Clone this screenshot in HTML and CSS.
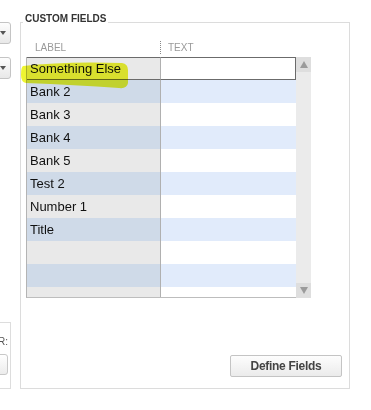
FILE: index.html
```html
<!DOCTYPE html>
<html lang="en">

<head>
    <meta charset="UTF-8">
    <meta name="viewport" content="width=device-width, initial-scale=1.0">
    <title>Custom Fields</title>
    <link rel="stylesheet" href="styles.css">
</head>

<body>

    <div class="page">

        <aside class="side">
            <div class="side-inner">
                <div class="select"><span class="caret"></span></div>
                <div class="select second"><span class="caret"></span></div>
                <div class="side-box">
                    <p class="side-label">OWNER:</p>
                    <div class="side-button"></div>
                </div>
            </div>
        </aside>

        <section class="panel">
            <h2 class="panel-title">CUSTOM FIELDS</h2>

            <div class="grid-head">
                <span class="head-label">LABEL</span>
                <span class="head-text">TEXT</span>
            </div>

            <div class="grid">
                <div class="rows">
                    <div class="row selected"><span class="cell-label">Something Else</span><span class="cell-text"></span></div>
                    <div class="row"><span class="cell-label">Bank 2</span><span class="cell-text"></span></div>
                    <div class="row"><span class="cell-label">Bank 3</span><span class="cell-text"></span></div>
                    <div class="row"><span class="cell-label">Bank 4</span><span class="cell-text"></span></div>
                    <div class="row"><span class="cell-label">Bank 5</span><span class="cell-text"></span></div>
                    <div class="row"><span class="cell-label">Test 2</span><span class="cell-text"></span></div>
                    <div class="row"><span class="cell-label">Number 1</span><span class="cell-text"></span></div>
                    <div class="row"><span class="cell-label">Title</span><span class="cell-text"></span></div>
                    <div class="row"><span class="cell-label"></span><span class="cell-text"></span></div>
                    <div class="row"><span class="cell-label"></span><span class="cell-text"></span></div>
                    <div class="row"><span class="cell-label"></span><span class="cell-text"></span></div>
                </div>
                <div class="scrollbar">
                    <span class="scroll-btn"><span class="arrow up"></span></span>
                    <span class="scroll-btn"><span class="arrow down"></span></span>
                </div>
            </div>

            <div class="panel-foot">
                <button class="define-btn">Define Fields</button>
            </div>
        </section>

    </div>

    <!-- marker stroke someone drew over the screenshot -->
    <svg class="highlight" width="120" height="40" viewBox="0 0 120 40">
        <path d="M3 8 Q45 3 102 5 Q108 6 108 12 L108 25 Q107 31 99 30 Q55 27 6 25 Q1 24 1 17 Q1 9 3 8 Z"
            fill="#eef532" />
    </svg>

</body>

</html>
```

FILE: styles.css
```css
body {
    margin: 0;
    font-family: "Liberation Sans", Arial, sans-serif;
    background-color: #fff;
    color: #111;
}

.page {
    position: relative;
    display: flex;
    width: 371px;
    height: 410px;
    overflow: hidden;
}

/* left column, only its right edge is visible */

.side {
    flex: none;
    width: 12px;
    overflow: hidden;
}

.side-inner {
    display: flex;
    flex-direction: column;
    width: 101px;
    margin-left: -90px;
    padding-top: 22px;
}

.select {
    display: flex;
    align-items: center;
    justify-content: flex-end;
    box-sizing: border-box;
    height: 22px;
    padding-right: 4px;
    border: 1px solid #c4c4c4;
    border-radius: 3px;
    background: linear-gradient(#fdfdfd, #e8e8e8);
}

.select.second {
    margin-top: 13px;
}

.caret {
    width: 0;
    height: 0;
    border-left: 3px solid transparent;
    border-right: 3px solid transparent;
    border-top: 4px solid #555;
}

.side-box {
    box-sizing: border-box;
    height: 67px;
    margin-top: 243px;
    padding-top: 13px;
    border-top: 1px solid #ddd;
    border-right: 1px solid #ddd;
    border-bottom: 1px solid #ddd;
}

.side-label {
    margin: 0;
    padding-right: 2px;
    text-align: right;
    font-size: 10px;
    line-height: 12px;
    color: #555;
}

.side-button {
    width: 98px;
    height: 21px;
    margin-top: 6px;
    box-sizing: border-box;
    border: 1px solid #c8c8c8;
    border-radius: 3px;
    background: linear-gradient(#fff, #ececec);
}

/* custom fields panel */

.panel {
    display: flex;
    flex-direction: column;
    flex: none;
    box-sizing: border-box;
    width: 330px;
    height: 367px;
    margin: 22px 0 0 8px;
    padding: 0 0 0 5px;
    border: 1px solid #dcdcdc;
}

.panel-title {
    align-self: flex-start;
    margin: -10px 0 0 -3px;
    padding: 0 2px;
    font-size: 10px;
    line-height: 12px;
    font-weight: bold;
    color: #333;
    background-color: #fff;
}

.grid-head {
    display: flex;
    align-items: center;
    height: 19px;
    margin-top: 13px;
    font-size: 10px;
    color: #9a9a9a;
}

.head-label {
    width: 125px;
    padding-left: 9px;
}

.head-text {
    padding-left: 7px;
    border-left: 1px dotted #888;
    line-height: 13px;
}

.grid {
    display: flex;
    height: 241px;
}

.rows {
    width: 270px;
    box-sizing: border-box;
    border-left: 1px solid #b4b4b4;
    border-bottom: 1px solid #bdbdbd;
    overflow: hidden;
}

.row {
    display: flex;
    height: 23px;
    font-size: 13px;
    line-height: 23px;
}

.cell-label {
    box-sizing: border-box;
    width: 134px;
    padding-left: 3px;
    border-right: 1px solid #b0b0b0;
    background-color: #e9e9e9;
    white-space: nowrap;
}

.cell-text {
    flex: 1;
    background-color: #fff;
}

.row:nth-child(even) .cell-label {
    background-color: #cfdae8;
}

.row:nth-child(even) .cell-text {
    background-color: #e1ebfb;
}

.row.selected .cell-label {
    border-top: 1px solid #6b6b6b;
    border-bottom: 1px solid #6b6b6b;
    line-height: 21px;
}

.row.selected .cell-text {
    border: 1px solid #6b6b6b;
    border-left: none;
}

.scrollbar {
    display: flex;
    flex-direction: column;
    justify-content: space-between;
    width: 15px;
    background-color: #ebebeb;
}

.scroll-btn {
    display: flex;
    align-items: center;
    justify-content: center;
    height: 15px;
    background-color: #dedede;
}

.arrow {
    width: 0;
    height: 0;
    border-left: 4px solid transparent;
    border-right: 4px solid transparent;
}

.arrow.up {
    border-bottom: 7px solid #9b9b9b;
}

.arrow.down {
    border-top: 7px solid #9b9b9b;
}

.panel-foot {
    display: flex;
    justify-content: flex-end;
    margin-top: auto;
    padding: 0 7px 11px 0;
}

.define-btn {
    width: 112px;
    height: 22px;
    padding: 0;
    border: 1px solid #c4c4c4;
    border-radius: 2px;
    background: linear-gradient(#fdfdfd, #ebebeb);
    font-family: "Liberation Sans", Arial, sans-serif;
    font-size: 12px;
    font-weight: bold;
    letter-spacing: -0.3px;
    color: #444;
}

.highlight {
    position: absolute;
    left: 20px;
    top: 58px;
    mix-blend-mode: multiply;
    pointer-events: none;
}
```
